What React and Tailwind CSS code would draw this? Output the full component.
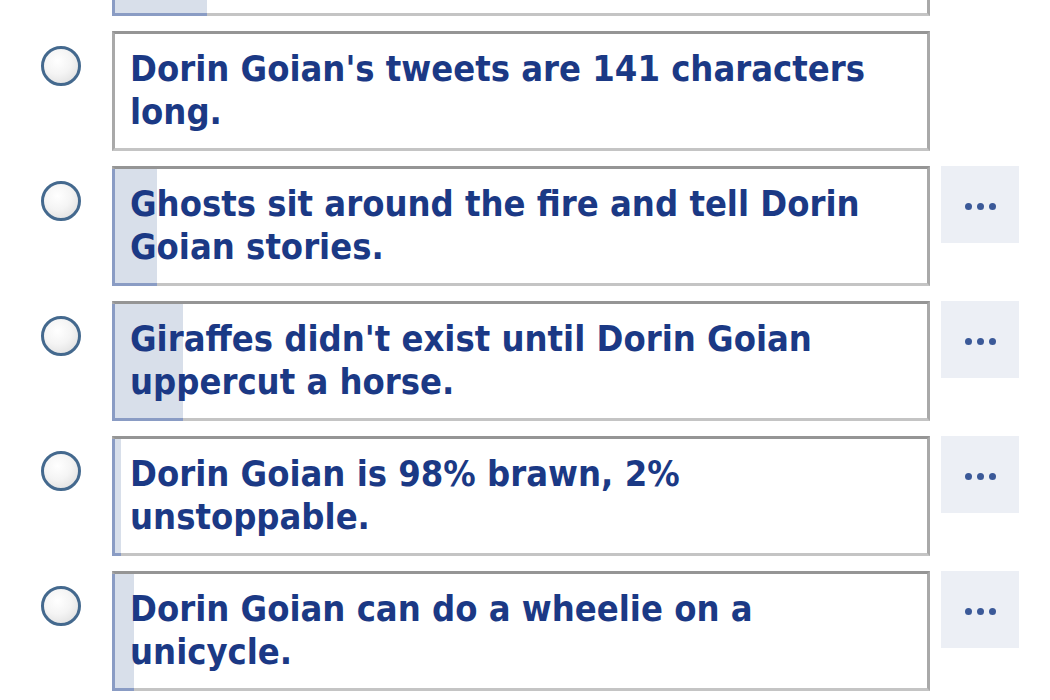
import React from "react";

const rows = [
  { text: "", fill: 95, button: false, partial: true },
  { text: "Dorin Goian's tweets are 141 characters long.", fill: 0, button: false },
  { text: "Ghosts sit around the fire and tell Dorin Goian stories.", fill: 45, button: true },
  { text: "Giraffes didn't exist until Dorin Goian uppercut a horse.", fill: 71, button: true },
  { text: "Dorin Goian is 98% brawn, 2% unstoppable.", fill: 9, button: true },
  { text: "Dorin Goian can do a wheelie on a unicycle.", fill: 22, button: true },
];

function Radio() {
  return (
    <div className="w-[40px] h-[40px] rounded-full border-[3px] border-[#44698e] bg-[radial-gradient(circle_at_40%_35%,#ffffff_0%,#f4f4f4_45%,#d9d9d9_100%)]" />
  );
}

function Row({ row }) {
  return (
    <div className="flex items-start h-[120px]">
      <div className="w-[112px] flex justify-start pl-[41px] pt-[15px]">
        {!row.partial && <Radio />}
      </div>
      <div className="relative w-[818px] h-[120px] bg-white border-[3px] border-[#a9a9a9] border-t-[#959595] border-b-[#c4c4c4]">
        {row.fill > 0 && (
          <div
            className="absolute left-[-3px] top-0 bottom-[-3px] bg-[#d8dfea] border-l-[3px] border-b-[3px] border-[#8a9cc4]"
            style={{ width: row.fill }}
          />
        )}
        <div className="relative pl-[15px] pr-[30px] pt-[13px] text-[#1b3985] font-bold text-[36px] leading-[43px] tracking-[0px] font-['DejaVu_Sans_Condensed','DejaVu_Sans',sans-serif]">
          {row.text}
        </div>
      </div>
      {row.button && (
        <div className="ml-[11px] w-[78px] h-[77px] bg-[#eceff5] flex items-center justify-center gap-[5px] pt-[3px]">
          <span className="w-[7px] h-[7px] rounded-full bg-[#3b5998]" />
          <span className="w-[7px] h-[7px] rounded-full bg-[#3b5998]" />
          <span className="w-[7px] h-[7px] rounded-full bg-[#3b5998]" />
        </div>
      )}
    </div>
  );
}

export default function App() {
  return (
    <div className="w-[1050px] h-[700px] overflow-hidden bg-white">
      <div className="flex flex-col gap-[15px] mt-[-104px]">
        {rows.map((r, i) => (
          <Row key={i} row={r} />
        ))}
      </div>
    </div>
  );
}
